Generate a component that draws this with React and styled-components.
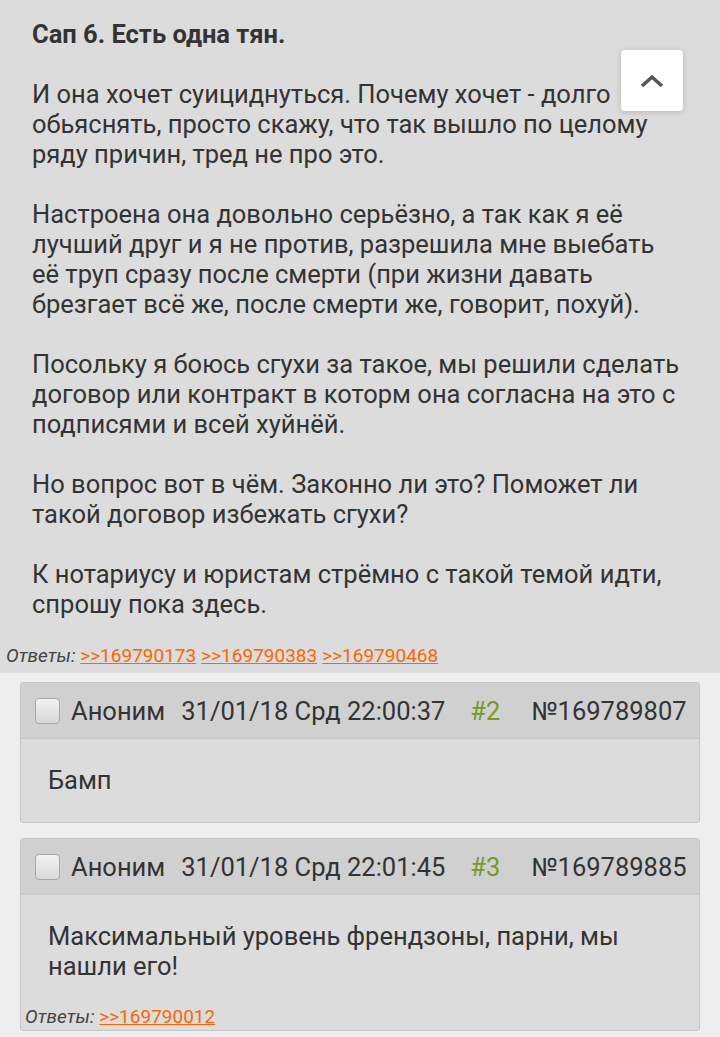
import React from 'react'
import styled, { createGlobalStyle } from 'styled-components'

const Global = createGlobalStyle`
    html, body {
        margin: 0;
        padding: 0;
        background: #eeeeee;
        font-family: Roboto, "Noto Sans", sans-serif;
        color: #333333;
    }
`

const Page = styled.div`
    width: 720px;
    height: 1037px;
    overflow: hidden;
    background: #eeeeee;
`

const OpPost = styled.div`
    position: relative;
    background: #dcdcdc;
    padding: 19px 0 5px 0;
`

const OpBody = styled.div`
    padding: 0 32px;
    font-size: 25.5px;
    line-height: 30px;
`

const Title = styled.div`
    font-weight: 700;
    font-size: 25.5px;
    line-height: 30px;
    margin-bottom: 30px;
`

const Para = styled.p`
    margin: 0 0 30px 0;
    &:last-child {
        margin-bottom: 0;
    }
`

const Replies = styled.div`
    font-style: italic;
    font-size: 19px;
    line-height: 24px;
    color: #444444;
    padding: 25px 0 0 6px;
`

const ReplyLink = styled.a`
    font-style: normal;
    color: #ff6600;
    text-decoration: underline;
    margin-right: 5px;
`

const UpButton = styled.button`
    position: absolute;
    top: 50px;
    left: 621px;
    width: 62px;
    height: 61px;
    border: none;
    border-radius: 4px;
    background: #ffffff;
    box-shadow: 0 1px 6px rgba(0, 0, 0, 0.18);
    display: flex;
    align-items: center;
    justify-content: center;
    padding: 0;
`

const Thread = styled.div`
    padding: 9px 20px 0 20px;
    display: flex;
    flex-direction: column;
    gap: 15px;
`

const Card = styled.div`
    background: #dcdcdc;
    border: 1px solid #c6c6c6;
    border-radius: 3px;
    overflow: hidden;
`

const Header = styled.div`
    background: #d0d0d0;
    height: 55px;
    display: flex;
    align-items: center;
    padding: 0 0 0 14px;
    font-size: 25.5px;
    border-bottom: 1px solid #c9c9c9;
`

const Check = styled.span`
    width: 25px;
    height: 26px;
    border: 1px solid #a8a8a8;
    border-radius: 4px;
    background: linear-gradient(#f2f2f2, #d8d8d8);
    margin-right: 11px;
    box-sizing: border-box;
`

const Name = styled.span`
    margin-right: 16px;
`

const Date = styled.span`
    margin-right: 25px;
`

const Num = styled.span`
    color: #789922;
    margin-right: 31px;
`

const PostId = styled.span``

const Body = styled.div`
    padding: 26px 27px ${p => (p.$withReplies ? '1px' : '27px')} 27px;
    font-size: 25.5px;
    line-height: 30px;
`

const ReplyFoot = styled.div`
    font-style: italic;
    font-size: 19px;
    line-height: 24px;
    color: #444444;
    margin: 24px 0 0 -23px;
`

const posts = [
    {
        time: '31/01/18 Срд 22:00:37',
        n: 2,
        id: '169789807',
        text: ['Бамп'],
        replies: [],
    },
    {
        time: '31/01/18 Срд 22:01:45',
        n: 3,
        id: '169789885',
        text: ['Максимальный уровень френдзоны, парни, мы', 'нашли его!'],
        replies: ['169790012'],
    },
]

const App = () => {
    return (
        <Page>
            <Global />
            <OpPost>
                <OpBody>
                    <Title>Сап 6. Есть одна тян.</Title>
                    <Para>
                        И она хочет суициднуться. Почему хочет - долго
                        <br />
                        обьяснять, просто скажу, что так вышло по целому
                        <br />
                        ряду причин, тред не про это.
                    </Para>
                    <Para>
                        Настроена она довольно серьёзно, а так как я её
                        <br />
                        лучший друг и я не против, разрешила мне выебать
                        <br />
                        её труп сразу после смерти (при жизни давать
                        <br />
                        брезгает всё же, после смерти же, говорит, похуй).
                    </Para>
                    <Para>
                        Посольку я боюсь сгухи за такое, мы решили сделать
                        <br />
                        договор или контракт в которм она согласна на это с
                        <br />
                        подписями и всей хуйнёй.
                    </Para>
                    <Para>
                        Но вопрос вот в чём. Законно ли это? Поможет ли
                        <br />
                        такой договор избежать сгухи?
                    </Para>
                    <Para>
                        К нотариусу и юристам стрёмно с такой темой идти,
                        <br />
                        спрошу пока здесь.
                    </Para>
                </OpBody>
                <Replies>
                    Ответы:{' '}
                    <ReplyLink>&gt;&gt;169790173</ReplyLink>
                    <ReplyLink>&gt;&gt;169790383</ReplyLink>
                    <ReplyLink>&gt;&gt;169790468</ReplyLink>
                </Replies>
                <UpButton>
                    <svg width="26" height="16" viewBox="0 0 26 16">
                        <path d="M3 13 L13 4 L23 13" fill="none" stroke="#555" strokeWidth="3.5" />
                    </svg>
                </UpButton>
            </OpPost>
            <Thread>
                {posts.map(p => (
                    <Card key={p.id}>
                        <Header>
                            <Check />
                            <Name>Аноним</Name>
                            <Date>{p.time}</Date>
                            <Num>#{p.n}</Num>
                            <PostId>№{p.id}</PostId>
                        </Header>
                        <Body $withReplies={p.replies.length > 0}>
                            <div>
                                {p.text.map((t, i) => (
                                    <div key={i}>{t}</div>
                                ))}
                            </div>
                            {p.replies.length > 0 && (
                                <ReplyFoot>
                                    Ответы:{' '}
                                    {p.replies.map(r => (
                                        <ReplyLink key={r}>&gt;&gt;{r}</ReplyLink>
                                    ))}
                                </ReplyFoot>
                            )}
                        </Body>
                    </Card>
                ))}
            </Thread>
        </Page>
    )
}

export default App
